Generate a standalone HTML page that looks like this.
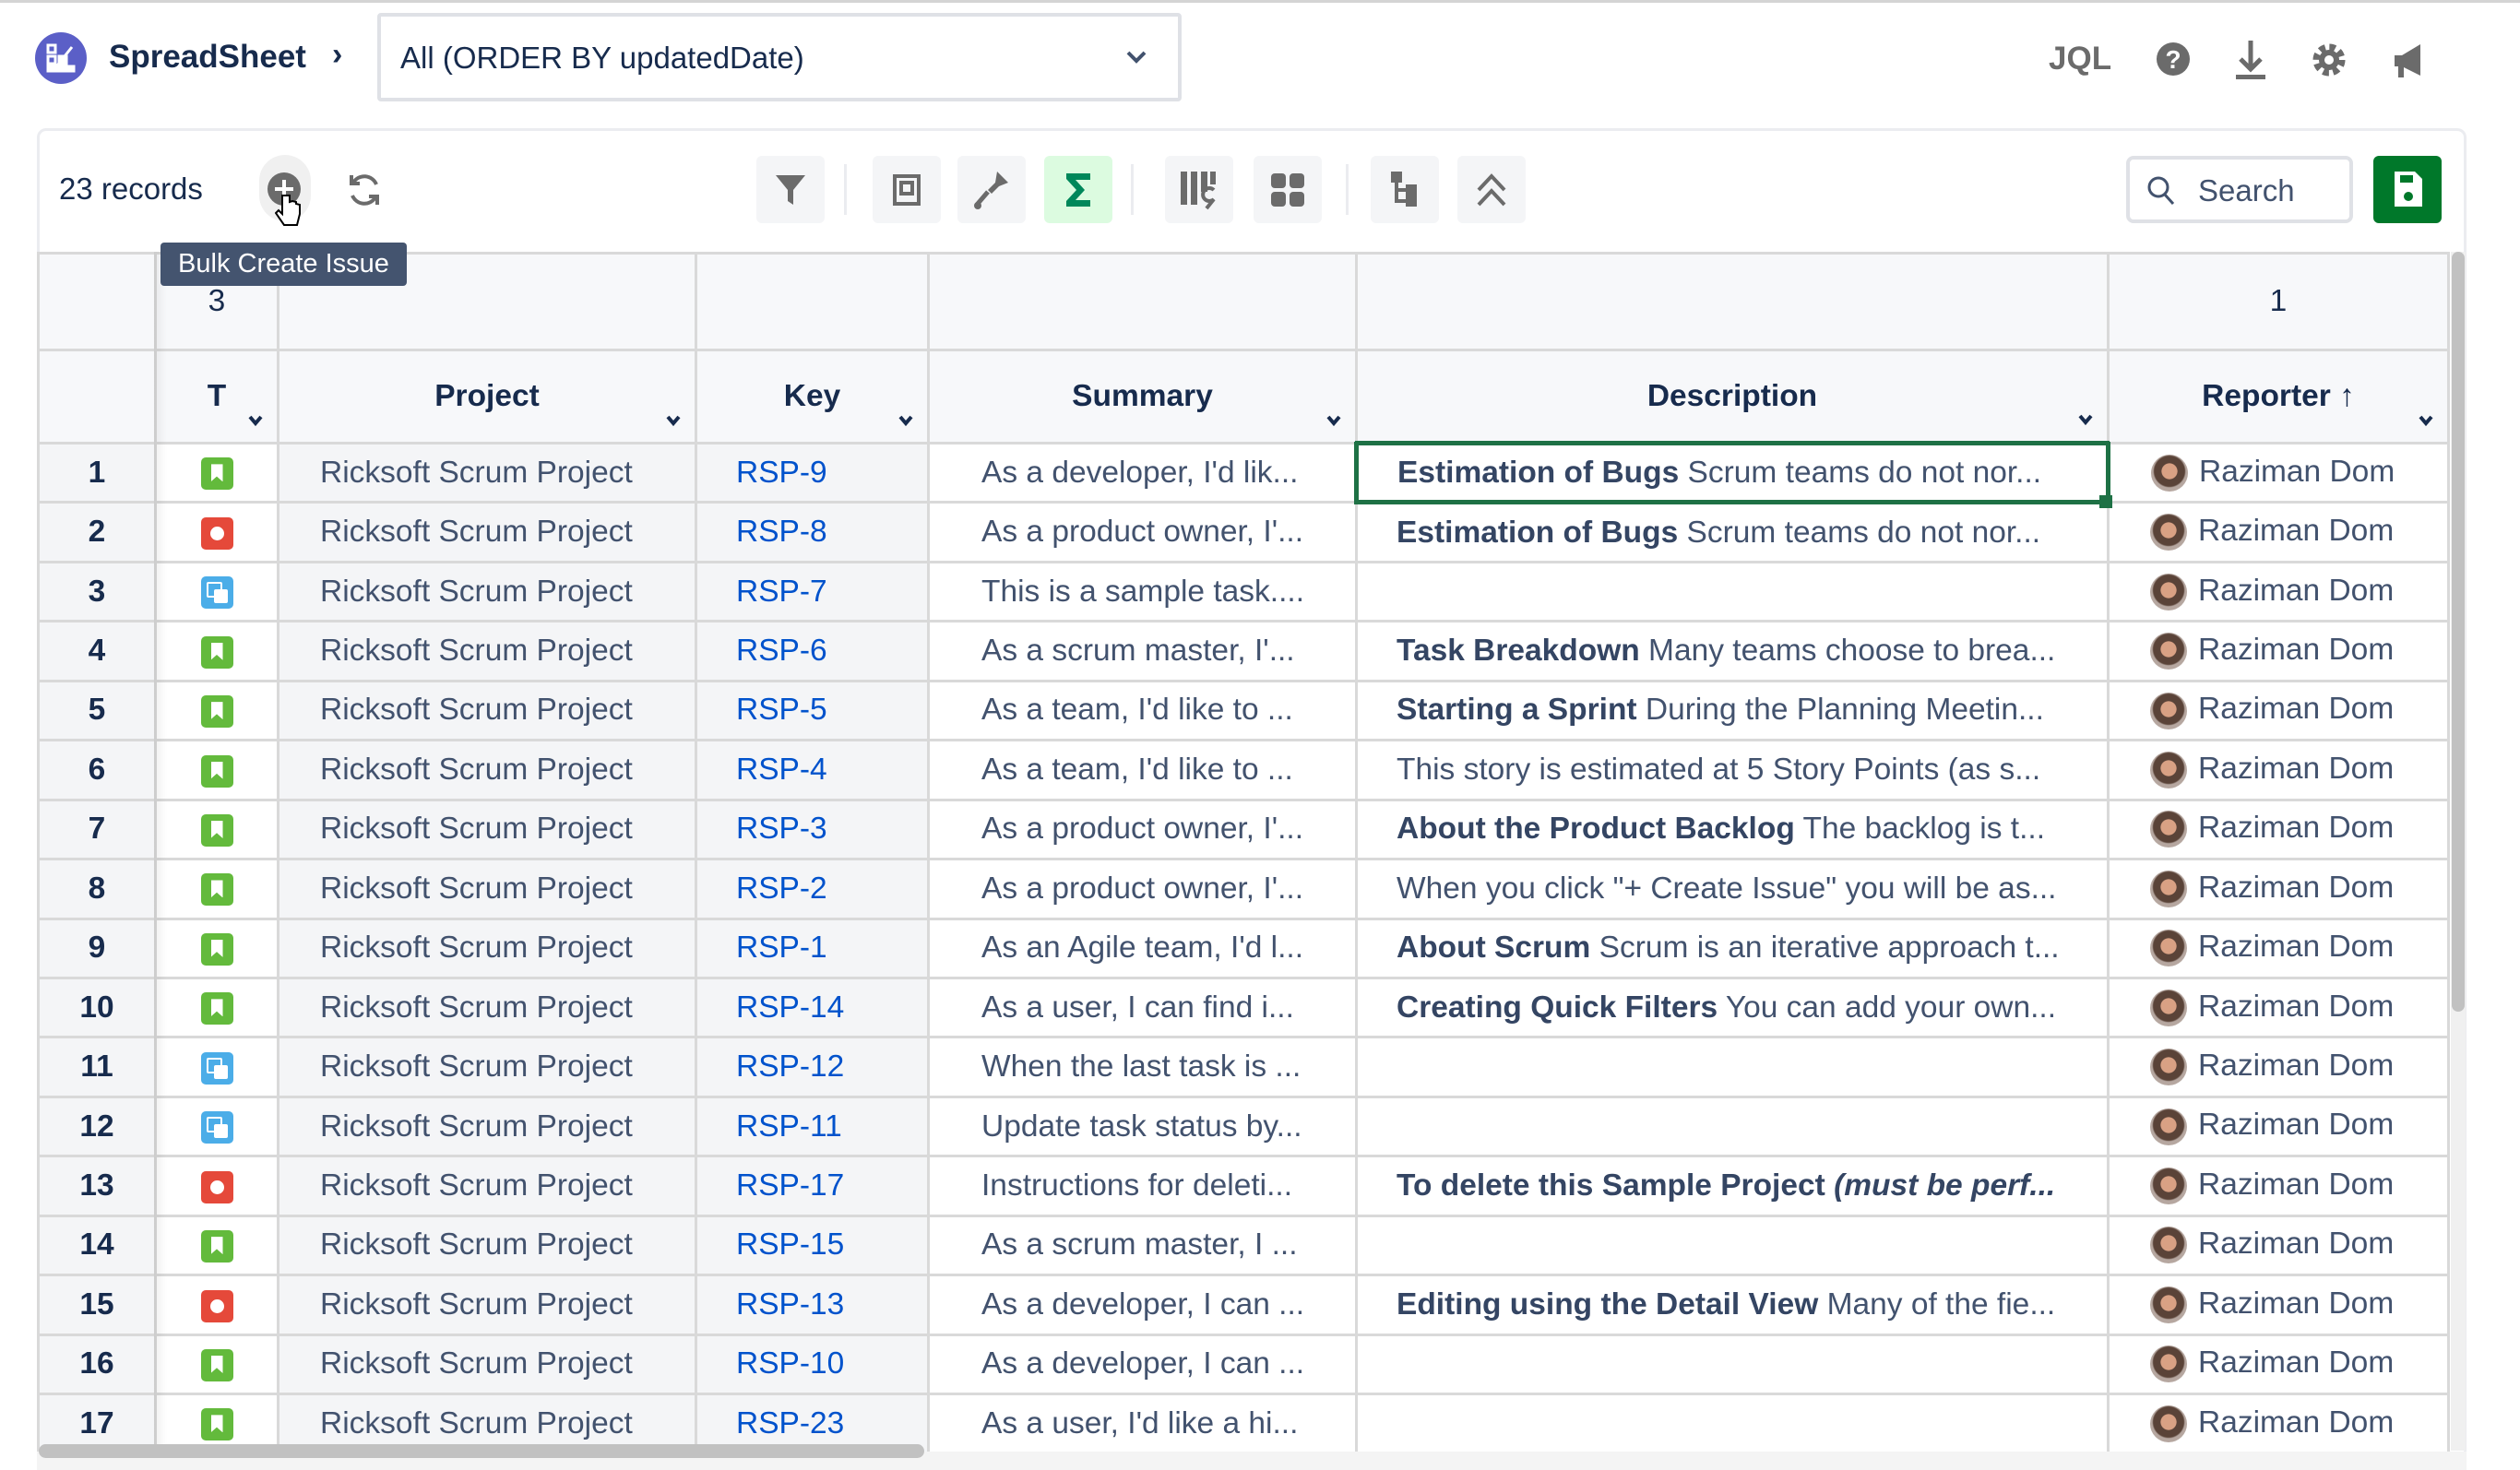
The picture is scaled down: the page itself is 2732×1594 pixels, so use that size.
<!DOCTYPE html>
<html><head><meta charset="utf-8"><style>
*{box-sizing:border-box;margin:0;padding:0}
body{width:2732px;height:1594px;background:#fff;font-family:"Liberation Sans",sans-serif;color:#42526e;position:relative;overflow:hidden}
.a{position:absolute}
.topline{left:0;top:0;width:2732px;height:3px;background:#d4d4d4}
.tb{width:74px;height:73px;top:169px;background:#f4f5f7;border-radius:6px;display:flex;align-items:center;justify-content:center}
.sep{top:178px;width:3px;height:55px;background:#ebecf0}
table{border-collapse:collapse;table-layout:fixed;position:absolute;left:40px;top:273px;width:2613px}
td,th{border:3px solid #d9d9d9;height:64.45px;font-size:33.5px;white-space:nowrap;overflow:hidden;padding:0}
th{background:#f7f8fa;color:#172b4d;font-weight:bold;position:relative}
tr.h1 th{height:105px;font-weight:normal;color:#172b4d}
tr.h2 th{height:101px}
.rn{background:#f4f5f7;text-align:center;color:#172b4d;font-weight:bold}
.ty{text-align:center;background:#fff}
.pr{background:#f4f5f7;padding-left:44px}
.ky{background:#f4f5f7;padding-left:42px;color:#0052cc}
.su{padding-left:56px}
.de{padding-left:42px;text-overflow:ellipsis}
.de b{color:#344563}
.re{padding-left:44px}
.chev{position:absolute;right:14px;bottom:16px;width:18px;height:14px}
.ic{display:inline-block;width:35px;height:35px;border-radius:5px;vertical-align:middle;position:relative}
.g{background:#63ba3c}.r{background:#e5493a}.b{background:#4bade8}
.g:after{content:"";position:absolute;left:11px;top:7px;width:13px;height:19px;background:#fff;clip-path:polygon(0 0,100% 0,100% 100%,50% 70%,0 100%)}
.r:after{content:"";position:absolute;left:10px;top:10px;width:15px;height:15px;border-radius:50%;background:#fff}
.b:after{content:"";position:absolute;left:6px;top:6px;width:13px;height:13px;border:2px solid #fff;border-radius:2px}
.b:before{content:"";position:absolute;left:14px;top:14px;width:15px;height:15px;background:#fff;border-radius:2px}
.av{display:inline-block;width:40px;height:40px;border-radius:50%;background:radial-gradient(circle at 50% 45%,#d9a184 0 28%,#5a4338 30% 55%,#b6a7a0 60%);vertical-align:middle;margin-right:12px}
</style></head><body>
<div class="a topline"></div>
<div class="a" style="left:38px;top:35px;width:56px;height:56px;border-radius:50%;background:#5b5fc7"></div>
<svg class="a" style="left:48px;top:45px" width="36" height="36" viewBox="0 0 36 36" fill="none" stroke="#fff" stroke-width="3"><rect x="4" y="4" width="8" height="8"/><rect x="4" y="16" width="8" height="8"/><rect x="16" y="16" width="8" height="8" fill="#fff"/><rect x="4" y="27" width="28" height="5" fill="#fff"/><path d="M14 26 L30 6"/></svg>
<div class="a" style="left:118px;top:42px;font-size:35px;font-weight:bold;color:#172b4d">SpreadSheet</div>
<div class="a" style="left:360px;top:40px;font-size:34px;font-weight:bold;color:#172b4d">›</div>
<div class="a" style="left:409px;top:14px;width:872px;height:96px;border:4px solid #dfe1e6;border-radius:4px"></div>
<div class="a" style="left:434px;top:44px;font-size:33px;color:#172b4d">All (ORDER BY updatedDate)</div>
<svg class="a" style="left:1220px;top:54px" width="24" height="16" viewBox="0 0 24 16"><path d="M3 3l9 9 9-9" stroke="#42526e" stroke-width="4" fill="none"/></svg>
<div class="a" style="left:2221px;top:44px;font-size:35px;font-weight:bold;color:#6b6b6b">JQL</div>
<svg class="a" style="left:2336px;top:44px" width="40" height="40" viewBox="0 0 40 40"><circle cx="20" cy="20" r="18" fill="#6b6b6b"/><text x="20" y="30" font-size="28" font-weight="bold" text-anchor="middle" fill="#fff" font-family="Liberation Sans">?</text></svg>
<svg class="a" style="left:2420px;top:42px" width="40" height="46" viewBox="0 0 40 46"><path d="M20 2v30M9 22l11 11 11-11" stroke="#6b6b6b" stroke-width="5" fill="none"/><rect x="4" y="39" width="32" height="5" fill="#6b6b6b"/></svg>
<svg class="a" style="left:2504px;top:44px" width="42" height="42" viewBox="0 0 42 42"><circle cx="21" cy="21" r="13" fill="none" stroke="#6b6b6b" stroke-width="9" stroke-dasharray="6 4.2"/><circle cx="21" cy="21" r="11" fill="#6b6b6b"/><circle cx="21" cy="21" r="5" fill="#fff"/></svg>
<svg class="a" style="left:2592px;top:46px" width="40" height="40" viewBox="0 0 40 40"><path d="M4 14h8l20-12v34L12 26H4z" fill="#6b6b6b"/><rect x="8" y="26" width="6" height="12" fill="#6b6b6b"/></svg>
<div class="a" style="left:40px;top:139px;width:2634px;height:1445px;border:3px solid #ebecf0;border-radius:10px"></div>
<div class="a" style="left:64px;top:186px;font-size:33px;color:#172b4d">23 records</div>
<div class="a" style="left:281px;top:168px;width:56px;height:72px;border-radius:28px;background:#f0f0f0"></div>
<svg class="a" style="left:289px;top:186px" width="38" height="38" viewBox="0 0 38 38"><circle cx="19" cy="19" r="18" fill="#6b6b6b"/><path d="M19 9v20M9 19h20" stroke="#fff" stroke-width="4"/></svg>
<svg class="a" style="left:375px;top:186px" width="40" height="40" viewBox="0 0 40 40" fill="none" stroke="#6b6b6b" stroke-width="4"><path d="M33 14A14 14 0 0 0 8 12M7 26a14 14 0 0 0 25 2"/><path d="M6 4v9h9M34 36v-9h-9"/></svg>
<div class="a tb" style="left:820px"><svg width="34" height="36" viewBox="0 0 34 36"><path d="M1 2h32L20 18v16l-6-4V18z" fill="#6b6b6b"/></svg></div>
<div class="a sep" style="left:915px"></div>
<div class="a tb" style="left:946px"><svg width="32" height="36" viewBox="0 0 32 36" fill="none" stroke="#6b6b6b" stroke-width="4"><rect x="3" y="3" width="26" height="30"/><rect x="10" y="10" width="12" height="12"/></svg></div>
<div class="a tb" style="left:1038px"><svg width="40" height="44" viewBox="0 0 40 44"><path d="M26 2l12 12-10 4-8 8-4-4 8-8z" fill="#6b6b6b"/><path d="M16 24L4 38" stroke="#6b6b6b" stroke-width="5"/><circle cx="5" cy="39" r="4" fill="#6b6b6b"/></svg></div>
<div class="a tb" style="left:1132px;background:#dcfbe0"><svg width="30" height="40" viewBox="0 0 30 40"><path d="M2 2h26v7H12l10 11-10 11h16v7H2v-6l11-12L2 8z" fill="#00875a"/></svg></div>
<div class="a sep" style="left:1226px"></div>
<div class="a tb" style="left:1263px"><svg width="44" height="44" viewBox="0 0 44 44"><rect x="2" y="2" width="7" height="36" fill="#6b6b6b"/><rect x="13" y="2" width="7" height="36" fill="#6b6b6b"/><rect x="24" y="2" width="7" height="22" fill="#6b6b6b"/><rect x="34" y="2" width="6" height="14" fill="#6b6b6b"/><path d="M38 22a7 7 0 1 0 0 10l-8 10" stroke="#6b6b6b" stroke-width="4" fill="none"/></svg></div>
<div class="a tb" style="left:1359px"><svg width="40" height="40" viewBox="0 0 40 40" fill="#6b6b6b"><rect x="2" y="2" width="16" height="16" rx="4"/><rect x="22" y="2" width="16" height="16" rx="4"/><rect x="2" y="22" width="16" height="16" rx="4"/><rect x="22" y="22" width="16" height="16" rx="4"/></svg></div>
<div class="a sep" style="left:1459px"></div>
<div class="a tb" style="left:1486px"><svg width="32" height="40" viewBox="0 0 32 40" fill="none" stroke="#6b6b6b" stroke-width="4"><rect x="3" y="2" width="8" height="8" fill="#6b6b6b"/><path d="M7 10v22h12M7 20h12"/><rect x="19" y="16" width="8" height="8" fill="#6b6b6b"/><rect x="19" y="28" width="8" height="8" fill="#6b6b6b"/></svg></div>
<div class="a tb" style="left:1580px"><svg width="34" height="40" viewBox="0 0 34 40" fill="none" stroke="#6b6b6b" stroke-width="4"><path d="M3 20L17 5l14 15M3 36L17 21l14 15"/></svg></div>
<div class="a" style="left:2305px;top:169px;width:246px;height:73px;border:4px solid #dfe1e6;border-radius:8px"></div>
<svg class="a" style="left:2327px;top:190px" width="32" height="34" viewBox="0 0 32 34" fill="none" stroke="#42526e" stroke-width="3"><circle cx="13" cy="13" r="10"/><path d="M20 21l9 10"/></svg>
<div class="a" style="left:2383px;top:188px;font-size:33px;color:#42526e">Search</div>
<div class="a" style="left:2573px;top:169px;width:74px;height:73px;border-radius:6px;background:#00782a"></div>
<svg class="a" style="left:2592px;top:182px" width="36" height="46" viewBox="0 0 36 46"><path d="M4 4h22l8 8v30H4z" fill="#fff"/><rect x="10" y="8" width="14" height="8" fill="#00782a"/><circle cx="19" cy="31" r="5" fill="#00782a"/></svg>
<table>
<colgroup><col style="width:127px"><col style="width:133px"><col style="width:453px"><col style="width:252px"><col style="width:464px"><col style="width:815px"><col style="width:369px"></colgroup>
<tr class="h1"><th></th><th>3</th><th></th><th></th><th></th><th></th><th>1</th></tr>
<tr class="h2"><th></th><th>T<svg class="chev" viewBox="0 0 18 14"><path d="M3 3l6 7 6-7" stroke="#172b4d" stroke-width="4" fill="none"/></svg></th><th>Project<svg class="chev" viewBox="0 0 18 14"><path d="M3 3l6 7 6-7" stroke="#172b4d" stroke-width="4" fill="none"/></svg></th><th>Key<svg class="chev" viewBox="0 0 18 14"><path d="M3 3l6 7 6-7" stroke="#172b4d" stroke-width="4" fill="none"/></svg></th><th>Summary<svg class="chev" viewBox="0 0 18 14"><path d="M3 3l6 7 6-7" stroke="#172b4d" stroke-width="4" fill="none"/></svg></th><th>Description<svg class="chev" viewBox="0 0 18 14"><path d="M3 3l6 7 6-7" stroke="#172b4d" stroke-width="4" fill="none"/></svg></th><th>Reporter ↑<svg class="chev" viewBox="0 0 18 14"><path d="M3 3l6 7 6-7" stroke="#172b4d" stroke-width="4" fill="none"/></svg></th></tr>
<tr><td class="rn">1</td><td class="ty"><span class="ic g"></span></td><td class="pr">Ricksoft Scrum Project</td><td class="ky">RSP-9</td><td class="su">As a developer, I'd lik...</td><td class="de" style="border:5px solid #1e7145"><b>Estimation of Bugs</b> Scrum teams do not nor...</td><td class="re"><span class="av"></span>Raziman Dom</td></tr>
<tr><td class="rn">2</td><td class="ty"><span class="ic r"></span></td><td class="pr">Ricksoft Scrum Project</td><td class="ky">RSP-8</td><td class="su">As a product owner, I'...</td><td class="de"><b>Estimation of Bugs</b> Scrum teams do not nor...</td><td class="re"><span class="av"></span>Raziman Dom</td></tr>
<tr><td class="rn">3</td><td class="ty"><span class="ic b"></span></td><td class="pr">Ricksoft Scrum Project</td><td class="ky">RSP-7</td><td class="su">This is a sample task....</td><td class="de"></td><td class="re"><span class="av"></span>Raziman Dom</td></tr>
<tr><td class="rn">4</td><td class="ty"><span class="ic g"></span></td><td class="pr">Ricksoft Scrum Project</td><td class="ky">RSP-6</td><td class="su">As a scrum master, I'...</td><td class="de"><b>Task Breakdown</b> Many teams choose to brea...</td><td class="re"><span class="av"></span>Raziman Dom</td></tr>
<tr><td class="rn">5</td><td class="ty"><span class="ic g"></span></td><td class="pr">Ricksoft Scrum Project</td><td class="ky">RSP-5</td><td class="su">As a team, I'd like to ...</td><td class="de"><b>Starting a Sprint</b> During the Planning Meetin...</td><td class="re"><span class="av"></span>Raziman Dom</td></tr>
<tr><td class="rn">6</td><td class="ty"><span class="ic g"></span></td><td class="pr">Ricksoft Scrum Project</td><td class="ky">RSP-4</td><td class="su">As a team, I'd like to ...</td><td class="de">This story is estimated at 5 Story Points (as s...</td><td class="re"><span class="av"></span>Raziman Dom</td></tr>
<tr><td class="rn">7</td><td class="ty"><span class="ic g"></span></td><td class="pr">Ricksoft Scrum Project</td><td class="ky">RSP-3</td><td class="su">As a product owner, I'...</td><td class="de"><b>About the Product Backlog</b> The backlog is t...</td><td class="re"><span class="av"></span>Raziman Dom</td></tr>
<tr><td class="rn">8</td><td class="ty"><span class="ic g"></span></td><td class="pr">Ricksoft Scrum Project</td><td class="ky">RSP-2</td><td class="su">As a product owner, I'...</td><td class="de">When you click "+ Create Issue" you will be as...</td><td class="re"><span class="av"></span>Raziman Dom</td></tr>
<tr><td class="rn">9</td><td class="ty"><span class="ic g"></span></td><td class="pr">Ricksoft Scrum Project</td><td class="ky">RSP-1</td><td class="su">As an Agile team, I'd l...</td><td class="de"><b>About Scrum</b> Scrum is an iterative approach t...</td><td class="re"><span class="av"></span>Raziman Dom</td></tr>
<tr><td class="rn">10</td><td class="ty"><span class="ic g"></span></td><td class="pr">Ricksoft Scrum Project</td><td class="ky">RSP-14</td><td class="su">As a user, I can find i...</td><td class="de"><b>Creating Quick Filters</b> You can add your own...</td><td class="re"><span class="av"></span>Raziman Dom</td></tr>
<tr><td class="rn">11</td><td class="ty"><span class="ic b"></span></td><td class="pr">Ricksoft Scrum Project</td><td class="ky">RSP-12</td><td class="su">When the last task is ...</td><td class="de"></td><td class="re"><span class="av"></span>Raziman Dom</td></tr>
<tr><td class="rn">12</td><td class="ty"><span class="ic b"></span></td><td class="pr">Ricksoft Scrum Project</td><td class="ky">RSP-11</td><td class="su">Update task status by...</td><td class="de"></td><td class="re"><span class="av"></span>Raziman Dom</td></tr>
<tr><td class="rn">13</td><td class="ty"><span class="ic r"></span></td><td class="pr">Ricksoft Scrum Project</td><td class="ky">RSP-17</td><td class="su">Instructions for deleti...</td><td class="de"><b>To delete this Sample Project <i>(must be perf...</i></b></td><td class="re"><span class="av"></span>Raziman Dom</td></tr>
<tr><td class="rn">14</td><td class="ty"><span class="ic g"></span></td><td class="pr">Ricksoft Scrum Project</td><td class="ky">RSP-15</td><td class="su">As a scrum master, I ...</td><td class="de"></td><td class="re"><span class="av"></span>Raziman Dom</td></tr>
<tr><td class="rn">15</td><td class="ty"><span class="ic r"></span></td><td class="pr">Ricksoft Scrum Project</td><td class="ky">RSP-13</td><td class="su">As a developer, I can ...</td><td class="de"><b>Editing using the Detail View</b> Many of the fie...</td><td class="re"><span class="av"></span>Raziman Dom</td></tr>
<tr><td class="rn">16</td><td class="ty"><span class="ic g"></span></td><td class="pr">Ricksoft Scrum Project</td><td class="ky">RSP-10</td><td class="su">As a developer, I can ...</td><td class="de"></td><td class="re"><span class="av"></span>Raziman Dom</td></tr>
<tr><td class="rn">17</td><td class="ty"><span class="ic g"></span></td><td class="pr">Ricksoft Scrum Project</td><td class="ky">RSP-23</td><td class="su">As a user, I'd like a hi...</td><td class="de"></td><td class="re"><span class="av"></span>Raziman Dom</td></tr>
</table>
<div class="a" style="left:2276px;top:537px;width:14px;height:14px;background:#1e7145"></div>
<div class="a" style="left:167px;top:273px;width:14px;height:1300px;background:linear-gradient(90deg,rgba(0,0,0,.06),rgba(0,0,0,0))"></div>
<div class="a" style="left:2657px;top:273px;width:16px;height:1300px;background:#f0f0f0"></div>
<div class="a" style="left:2658px;top:273px;width:14px;height:824px;border-radius:7px;background:#c1c1c1"></div>
<div class="a" style="left:40px;top:1574px;width:2634px;height:20px;background:#f4f4f4"></div>
<div class="a" style="left:42px;top:1566px;width:960px;height:15px;border-radius:8px;background:#c1c1c1"></div>
<div class="a" style="left:174px;top:263px;width:267px;height:47px;border-radius:4px;background:#44546f;color:#fff;font-size:29px;line-height:47px;text-align:center">Bulk Create Issue</div>
<svg class="a" style="left:298px;top:210px" width="30" height="36" viewBox="0 0 30 36"><path d="M8 2v20l-4-4-3 3 9 13h14l3-12V12l-4-1v-2l-4-1-3 1V2z" fill="#fff" stroke="#000" stroke-width="2"/></svg>
</body></html>
